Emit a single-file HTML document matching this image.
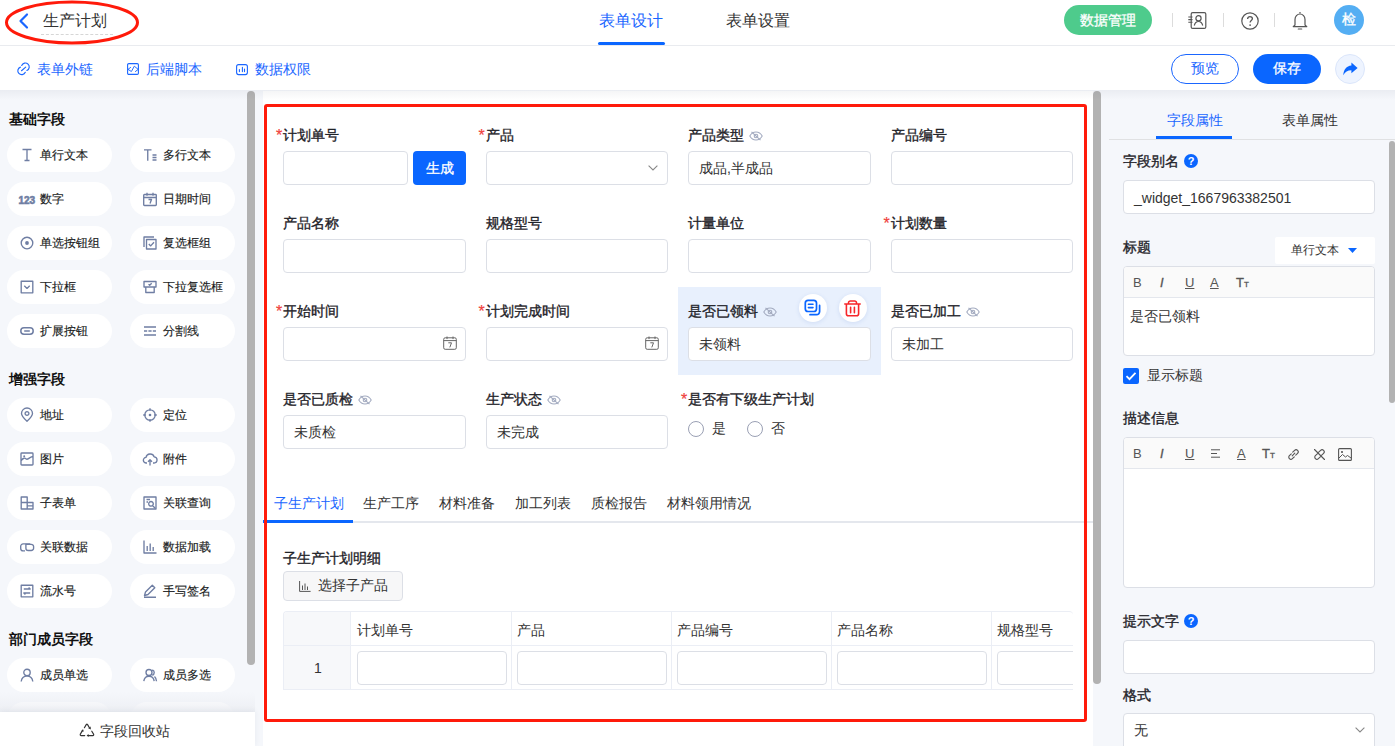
<!DOCTYPE html>
<html><head><meta charset="utf-8">
<style>
*{box-sizing:border-box;margin:0;padding:0}
html,body{width:1395px;height:746px;overflow:hidden;background:#f5f7fb;font-family:"Liberation Sans",sans-serif;color:#1f2329}
.a{position:absolute}
.t{position:absolute;white-space:nowrap;line-height:20px;margin-top:-1px}
svg{position:absolute;overflow:visible}
#hdr{position:absolute;left:0;top:0;width:1395px;height:46px;background:#fff;border-bottom:1px solid #e9ebef}
#tb{position:absolute;left:0;top:46px;width:1395px;height:44px;background:#fff}
.pill{position:absolute;width:105px;height:34px;border-radius:17px;background:#fff}
.pill .ic{position:absolute;left:13px;top:10px;width:14px;height:14px}
.pill span{position:absolute;left:33px;top:7px;font-size:12px;line-height:20px;color:#1a1c22;-webkit-text-stroke:0.15px #1a1c22;white-space:nowrap}
.sec{position:absolute;left:9px;font-size:14px;font-weight:bold;line-height:20px;color:#111;white-space:nowrap}
#canvas{position:absolute;left:263px;top:91px;width:830px;height:655px;background:#fff}
.lbl{position:absolute;font-size:14px;line-height:20px;color:#1f2329;-webkit-text-stroke:0.35px #1f2329;white-space:nowrap;margin-top:-1px}
.req{position:absolute;left:-7px;top:1px;color:#f0413c;font-size:16px;-webkit-text-stroke:0.2px #f0413c}
.inp{position:absolute;height:34px;border:1px solid #dcdfe6;border-radius:4px;background:#fff}
.inp span{position:absolute;left:10px;top:6px;font-size:14px;line-height:20px;color:#333;white-space:nowrap}
.eye{position:absolute;width:14px;height:10px}
.sb{position:absolute;background:#b2b2b2;border-radius:4px}
.rp-lbl{position:absolute;left:1123px;font-size:14px;line-height:20px;color:#1f2329;-webkit-text-stroke:0.35px #1f2329;white-space:nowrap;margin-top:-1px}
.q{position:absolute;width:14px;height:14px;border-radius:7px;background:#0a66ff;color:#fff;font-size:11px;font-weight:bold;line-height:14px;text-align:center}
.rinp{position:absolute;left:1123px;width:252px;border:1px solid #dcdfe6;border-radius:4px;background:#fff}
.tbi{position:absolute;font-size:13px;line-height:16px;color:#555;margin-top:-1px}
</style></head><body>

<!-- HEADER -->
<div id="hdr"></div>
<svg style="left:18px;top:13px" width="11" height="16" viewBox="0 0 11 16"><path d="M9 1.5 L2.5 8 L9 14.5" fill="none" stroke="#1a66ff" stroke-width="2.2" stroke-linecap="round" stroke-linejoin="round"/></svg>
<div class="t" style="left:43px;top:12px;font-size:16px;color:#333">生产计划</div>
<div class="a" style="left:41px;top:34px;width:72px;border-top:1px dashed #d6d6d6"></div>
<div class="t" style="left:598.5px;top:12px;font-size:16px;color:#1a66ff">表单设计</div>
<div class="a" style="left:598px;top:42px;width:67px;height:3px;border-radius:2px;background:#0a66ff"></div>
<div class="t" style="left:725.5px;top:12px;font-size:16px;color:#333">表单设置</div>

<div class="a" style="left:1064px;top:5px;width:88px;height:30px;border-radius:15px;background:#4ecb8c"></div>
<div class="t" style="left:1080px;top:11px;font-size:14px;color:#fff;-webkit-text-stroke:0.3px #fff">数据管理</div>
<div class="a" style="left:1172px;top:13px;width:1px;height:14px;background:#dcdcdc"></div>
<div class="a" style="left:1223px;top:13px;width:1px;height:14px;background:#dcdcdc"></div>
<div class="a" style="left:1274px;top:13px;width:1px;height:14px;background:#dcdcdc"></div>
<!-- contacts icon -->
<svg style="left:1188px;top:12px" width="19" height="17" viewBox="0 0 19 17"><rect x="3.2" y="0.6" width="14.6" height="15.8" rx="1.5" fill="none" stroke="#555" stroke-width="1.2"/><path d="M0.3 5h4.2M0.3 7.6h4.2M0.3 10.2h4.2" stroke="#555" stroke-width="1.1"/><circle cx="10.5" cy="6.2" r="2.6" fill="none" stroke="#555" stroke-width="1.2"/><path d="M6.3 13.5c0.6-2.6 2.2-4 4.2-4s3.6 1.4 4.2 4" fill="none" stroke="#555" stroke-width="1.2"/></svg>
<!-- help -->
<svg style="left:1241px;top:11.5px" width="18" height="18" viewBox="0 0 18 18"><circle cx="9" cy="9" r="8.2" fill="none" stroke="#555" stroke-width="1.2"/><path d="M6.6 7c0-1.5 1-2.4 2.4-2.4s2.4 0.9 2.4 2.2c0 1.6-2.3 1.9-2.3 3.7" fill="none" stroke="#555" stroke-width="1.3"/><circle cx="9.1" cy="13.1" r="0.9" fill="#555"/></svg>
<!-- bell -->
<svg style="left:1292px;top:11px" width="16" height="19" viewBox="0 0 16 19"><path d="M8 1v1.3M3 14V8.5C3 5.4 5.2 3 8 3s5 2.4 5 5.5V14l1.8 1.6H1.2L3 14z" fill="none" stroke="#555" stroke-width="1.2" stroke-linejoin="round"/><path d="M6.3 18h3.4" stroke="#555" stroke-width="1.2" stroke-linecap="round"/></svg>
<div class="a" style="left:1334px;top:5px;width:30px;height:30px;border-radius:15px;background:#54aef3"></div>
<div class="t" style="left:1342px;top:10px;font-size:14px;color:#fff;-webkit-text-stroke:0.3px #fff">检</div>

<!-- TOOLBAR -->
<div id="tb"></div>
<svg style="left:17px;top:62px" width="13" height="13" viewBox="0 0 13 13"><path d="M4.7 3.5A3.9 3.9 0 1 1 9.9 8.5M3.4 5.1A3.9 3.9 0 1 0 8.3 10.3M4.5 8.7L8.7 5.1" fill="none" stroke="#1a66ff" stroke-width="1.15" stroke-linecap="round"/></svg>
<div class="t" style="left:36.5px;top:60px;font-size:14px;color:#1a66ff">表单外链</div>
<svg style="left:127px;top:63px" width="12" height="12" viewBox="0 0 12 12"><rect x="0.6" y="0.6" width="10.8" height="10.8" rx="1.2" fill="none" stroke="#1a66ff" stroke-width="1.1"/><path d="M3.6 4.4L1 6.4L4.4 8.5L7.3 3.2L11.2 6.4L8.4 8.5" fill="none" stroke="#1a66ff" stroke-width="0.95" stroke-linecap="round" stroke-linejoin="round"/></svg>
<div class="t" style="left:145.5px;top:60px;font-size:14px;color:#1a66ff">后端脚本</div>
<svg style="left:236px;top:64px" width="12" height="11" viewBox="0 0 12 11"><rect x="0.6" y="0.6" width="10.8" height="10" rx="2" fill="none" stroke="#1a66ff" stroke-width="1.1"/><path d="M3.4 5.5V7.6M6.4 3.4V7.6M8.5 5V7.6" fill="none" stroke="#1a66ff" stroke-width="1.1" stroke-linecap="round"/></svg>
<div class="t" style="left:254.5px;top:60px;font-size:14px;color:#1a66ff">数据权限</div>

<div class="a" style="left:1171px;top:54px;width:68px;height:30px;border-radius:15px;border:1px solid #1a66ff;background:#fff"></div>
<div class="t" style="left:1191px;top:59px;font-size:14px;color:#1a66ff">预览</div>
<div class="a" style="left:1253px;top:54px;width:68px;height:30px;border-radius:15px;background:#0a66ff"></div>
<div class="t" style="left:1273px;top:59px;font-size:14px;color:#fff;-webkit-text-stroke:0.3px #fff">保存</div>
<div class="a" style="left:1335px;top:54px;width:30px;height:30px;border-radius:15px;background:#eef4ff;border:1px solid #dbe6fb"></div>
<svg style="left:1343px;top:62px" width="15" height="14" viewBox="0 0 15 14"><path d="M8.4 0.6L14.6 5.9L8.4 11.2V8.3C4.6 8.3 2.1 9.8 0.3 13.2C0.6 7.8 3.4 4.1 8.4 3.6z" fill="#0a66ff"/></svg>


<!-- LEFT PANEL -->
<div id="left" style="position:absolute;left:0;top:91px;width:247px;height:655px;overflow:hidden">
<div style="position:absolute;left:0;top:-91px;width:247px;height:746px">
<div class="sec" style="top:109px">基础字段</div>
<div class="pill" style="left:7px;top:138px"><svg class="ic" viewBox="0 0 14 14" width="14" height="14"><path d="M2.5 1.5h9M7 1.5v11M4.5 12.5h5" stroke="#6f7ea3" stroke-width="1.35" fill="none" stroke-linejoin="round"/></svg><span>单行文本</span></div>
<div class="pill" style="left:130px;top:138px"><svg class="ic" viewBox="0 0 14 14" width="14" height="14"><path d="M1 1.8h7.5M4.75 1.8v11M9.5 7h4M9.5 9.5h4M9.5 12h4" stroke="#6f7ea3" stroke-width="1.35" fill="none" stroke-linejoin="round"/></svg><span>多行文本</span></div>
<div class="pill" style="left:7px;top:182px"><svg class="ic" viewBox="0 0 14 14" width="14" height="14"><text x="-1.5" y="11.5" style="font:bold 10px 'Liberation Sans',sans-serif" fill="#6f7ea3" stroke="#6f7ea3" stroke-width="0.6">123</text></svg><span>数字</span></div>
<div class="pill" style="left:130px;top:182px"><svg class="ic" viewBox="0 0 14 14" width="14" height="14"><path d="M1.5 2.5h11a0.8 0.8 0 0 1 0.8 0.8v9.4a0.8 0.8 0 0 1-0.8 0.8h-11a0.8 0.8 0 0 1-0.8-0.8V3.3a0.8 0.8 0 0 1 0.8-0.8zM0.7 5.5h12.6M4 0.8v3M10 0.8v3M5.5 7.5h3l-1.5 4" stroke="#6f7ea3" stroke-width="1.35" fill="none" stroke-linejoin="round"/></svg><span>日期时间</span></div>
<div class="pill" style="left:7px;top:226px"><svg class="ic" viewBox="0 0 14 14" width="14" height="14"><path d="M7 1.2a5.8 5.8 0 1 1 0 11.6a5.8 5.8 0 1 1 0-11.6z" stroke="#6f7ea3" stroke-width="1.35" fill="none" stroke-linejoin="round"/><circle cx="7" cy="7" r="1.9" fill="#6f7ea3"/></svg><span>单选按钮组</span></div>
<div class="pill" style="left:130px;top:226px"><svg class="ic" viewBox="0 0 14 14" width="14" height="14"><path d="M1 11V1h10" stroke="#6f7ea3" stroke-width="1.35" fill="none" stroke-linejoin="round"/><path d="M3.5 3.5h9.5v9.5H3.5zM5.8 8l1.9 1.9 3.3-3.6" stroke="#6f7ea3" stroke-width="1.35" fill="none" stroke-linejoin="round"/></svg><span>复选框组</span></div>
<div class="pill" style="left:7px;top:270px"><svg class="ic" viewBox="0 0 14 14" width="14" height="14"><path d="M1.2 1.2h11.6v11.6H1.2zM4.3 5.8l2.7 2.6 2.7-2.6" stroke="#6f7ea3" stroke-width="1.35" fill="none" stroke-linejoin="round"/></svg><span>下拉框</span></div>
<div class="pill" style="left:130px;top:270px"><svg class="ic" viewBox="0 0 14 14" width="14" height="14"><path d="M1 1.5h12v5.5H1zM2.8 7v5.5h8.4V7M5.5 4.2l1.2 1 2-2" stroke="#6f7ea3" stroke-width="1.35" fill="none" stroke-linejoin="round"/></svg><span>下拉复选框</span></div>
<div class="pill" style="left:7px;top:314px"><svg class="ic" viewBox="0 0 14 14" width="14" height="14"><path d="M4 3.8h6a3.2 3.2 0 0 1 0 6.4H4a3.2 3.2 0 0 1 0-6.4zM4.2 7h5.6" stroke="#6f7ea3" stroke-width="1.5" fill="none" stroke-linejoin="round"/></svg><span>扩展按钮</span></div>
<div class="pill" style="left:130px;top:314px"><svg class="ic" viewBox="0 0 14 14" width="14" height="14"><path d="M1 3h12M1 7h3.2M5.4 7h3.2M9.8 7H13M1 11h12" stroke="#6f7ea3" stroke-width="1.35" fill="none" stroke-linejoin="round"/></svg><span>分割线</span></div>
<div class="sec" style="top:369px">增强字段</div>
<div class="pill" style="left:7px;top:398px"><svg class="ic" viewBox="0 0 14 14" width="14" height="14"><path d="M7 13.3C3.7 10.2 1.5 7.7 1.5 5.5a5.5 5.5 0 0 1 11 0c0 2.2-2.2 4.7-5.5 7.8z" stroke="#6f7ea3" stroke-width="1.35" fill="none" stroke-linejoin="round"/><path d="M7 3.6a1.9 1.9 0 1 1 0 3.8a1.9 1.9 0 1 1 0-3.8z" stroke="#6f7ea3" stroke-width="1.35" fill="none" stroke-linejoin="round"/></svg><span>地址</span></div>
<div class="pill" style="left:130px;top:398px"><svg class="ic" viewBox="0 0 14 14" width="14" height="14"><path d="M7 1.8a5.2 5.2 0 1 1 0 10.4a5.2 5.2 0 1 1 0-10.4z" stroke="#6f7ea3" stroke-width="1.35" fill="none" stroke-linejoin="round"/><circle cx="7" cy="7" r="1.3" fill="#6f7ea3"/><path d="M7 0.2v2.6M7 11.2v2.6M0.2 7h2.6M11.2 7h2.6" stroke="#6f7ea3" stroke-width="1.35" fill="none" stroke-linejoin="round"/></svg><span>定位</span></div>
<div class="pill" style="left:7px;top:442px"><svg class="ic" viewBox="0 0 14 14" width="14" height="14"><path d="M1.8 1h10.4a0.8 0.8 0 0 1 0.8 0.8v10.4a0.8 0.8 0 0 1-0.8 0.8H1.8a0.8 0.8 0 0 1-0.8-0.8V1.8a0.8 0.8 0 0 1 0.8-0.8zM1.2 8.5c2-2.5 3.5-3 5-1.5s3-2 6.6-2.5" stroke="#6f7ea3" stroke-width="1.35" fill="none" stroke-linejoin="round"/><circle cx="4.2" cy="4.2" r="1" fill="#6f7ea3"/></svg><span>图片</span></div>
<div class="pill" style="left:130px;top:442px"><svg class="ic" viewBox="0 0 14 14" width="14" height="14"><path d="M4 11H3.3A2.8 2.8 0 0 1 3 5.4a4.2 4.2 0 0 1 8.1-0.6A3.1 3.1 0 0 1 10.8 11H10M7 13.5V7.8M5 9.8l2-2 2 2" stroke="#6f7ea3" stroke-width="1.35" fill="none" stroke-linejoin="round"/></svg><span>附件</span></div>
<div class="pill" style="left:7px;top:486px"><svg class="ic" viewBox="0 0 14 14" width="14" height="14"><path d="M1.2 1h6v12H1.2zM7.2 6.5h5.8V13H7.2M1.2 6.5h6M7.2 9.8H13" stroke="#6f7ea3" stroke-width="1.35" fill="none" stroke-linejoin="round"/></svg><span>子表单</span></div>
<div class="pill" style="left:130px;top:486px"><svg class="ic" viewBox="0 0 14 14" width="14" height="14"><path d="M1 1h12v12H1zM3.5 3.5h3.5M3.5 6h1.5" stroke="#6f7ea3" stroke-width="1.35" fill="none" stroke-linejoin="round"/><path d="M8 5.5a2.3 2.3 0 1 1 0 4.6a2.3 2.3 0 1 1 0-4.6zM9.7 9.7l2.5 2.5" stroke="#6f7ea3" stroke-width="1.35" fill="none" stroke-linejoin="round"/></svg><span>关联查询</span></div>
<div class="pill" style="left:7px;top:530px"><svg class="ic" viewBox="0 0 14 14" width="14" height="14"><path d="M9.6 4.6V3.9H3.1A2.4 2.4 0 0 0 0.7 6.3v2.1a2.4 2.4 0 0 0 2.4 2.4H5" stroke="#6f7ea3" stroke-width="1.35" fill="none"/><path d="M5.9 4.3h5.4a2.3 2.3 0 0 1 2.3 2.3v1.6a2.3 2.3 0 0 1-2.3 2.3H8.2a2.3 2.3 0 0 1-2.3-2.3z" stroke="#6f7ea3" stroke-width="1.35" fill="none"/></svg><span>关联数据</span></div>
<div class="pill" style="left:130px;top:530px"><svg class="ic" viewBox="0 0 14 14" width="14" height="14"><path d="M1 0.5v12.5h12.5M4.2 11V6M7.2 11V3.5M10.2 11V7" stroke="#6f7ea3" stroke-width="1.35" fill="none" stroke-linejoin="round"/></svg><span>数据加载</span></div>
<div class="pill" style="left:7px;top:574px"><svg class="ic" viewBox="0 0 14 14" width="14" height="14"><path d="M1.2 1.2h11.6v11.6H1.2zM3.8 5h6.4l-1.6-1.4M10.2 9H3.8l1.6 1.4" stroke="#6f7ea3" stroke-width="1.35" fill="none" stroke-linejoin="round"/></svg><span>流水号</span></div>
<div class="pill" style="left:130px;top:574px"><svg class="ic" viewBox="0 0 14 14" width="14" height="14"><path d="M1.5 11.5l1-3.5 6.8-6.8 2.5 2.5-6.8 6.8zM1 13.2h12" stroke="#6f7ea3" stroke-width="1.35" fill="none" stroke-linejoin="round"/></svg><span>手写签名</span></div>
<div class="sec" style="top:629px">部门成员字段</div>
<div class="pill" style="left:7px;top:658px"><svg class="ic" viewBox="0 0 14 14" width="14" height="14"><path d="M7 1.2a3.2 3.2 0 1 1 0 6.4a3.2 3.2 0 1 1 0-6.4zM1.2 13.5c0.4-3.3 2.7-5.4 5.8-5.4s5.4 2.1 5.8 5.4" stroke="#6f7ea3" stroke-width="1.35" fill="none" stroke-linejoin="round"/></svg><span>成员单选</span></div>
<div class="pill" style="left:130px;top:658px"><svg class="ic" viewBox="0 0 14 14" width="14" height="14"><path d="M6 1.5a3 3 0 1 1 0 6a3 3 0 1 1 0-6zM0.8 13.2c0.4-3.1 2.4-5 5.2-5s4.8 1.9 5.2 5M9.3 1.8a3 3 0 0 1 0 5.6M11.5 8.6c1.1 1 1.8 2.6 2 4.6" stroke="#6f7ea3" stroke-width="1.35" fill="none" stroke-linejoin="round"/></svg><span>成员多选</span></div>
<div class="pill" style="left:7px;top:702px"><svg class="ic" viewBox="0 0 14 14" width="14" height="14"></svg><span>部门单选</span></div>
<div class="pill" style="left:130px;top:702px"><svg class="ic" viewBox="0 0 14 14" width="14" height="14"></svg><span>部门多选</span></div>
</div></div>
<div class="sb" style="left:247px;top:91px;width:8px;height:574px"></div>
<div class="a" style="left:0;top:692px;width:255px;height:20px;background:linear-gradient(rgba(244,246,250,0),rgba(236,238,243,0.9))"></div>
<div class="a" style="left:0;top:712px;width:255px;height:34px;background:#fff;box-shadow:0 -1px 6px rgba(40,50,80,.07)"></div>
<svg style="left:79px;top:723px" width="16" height="14" viewBox="0 0 16 14"><path d="M5.4 4.7L7.2 1.6Q7.9 0.9 8.6 1.6L10.4 4.7M3.4 7.6L1.3 11.3Q1 12.6 2.2 12.6H5.7M12.8 8.2L14.6 11.3Q15 12.6 13.8 12.6H9" stroke="#333" stroke-width="1.2" fill="none" stroke-linecap="round"/><path d="M9.2 5.2L11.9 6.4L11.6 3.6zM2.2 8.4L4.8 8.6L4 6zM9.6 11.1V14.1L7.6 12.6z" fill="#333"/></svg>
<div class="t" style="left:100px;top:722px;font-size:14px;color:#333">字段回收站</div>


<!-- CANVAS -->
<div id="canvas"></div>
<div style="position:absolute;left:0;top:0;width:1395px;height:746px">
<div class="a" style="left:678px;top:287px;width:203px;height:88px;background:#e8f0fd"></div>
<div class="lbl" style="left:283px;top:126px"><span class="req">*</span>计划单号</div>
<div class="inp" style="left:283px;top:151px;width:125px"></div>
<div class="a" style="left:413px;top:151px;width:53px;height:34px;border-radius:4px;background:#0a66ff"></div><div class="t" style="left:425.5px;top:159px;font-size:14px;color:#fff;-webkit-text-stroke:0.3px #fff">生成</div>
<div class="lbl" style="left:485.5px;top:126px"><span class="req">*</span>产品</div>
<div class="inp" style="left:485.5px;top:151px;width:182.5px"></div>
<svg viewBox="0 0 10 6" width="10" height="6" style="left:647.5px;top:165px"><path d="M0.6 0.6L5 5 9.4 0.6" stroke="#888" stroke-width="1.1" fill="none"/></svg>
<div class="lbl" style="left:688px;top:126px">产品类型</div>
<svg class="eye" viewBox="0 0 14 10" width="14" height="10" style="left:749px;top:131px"><path d="M0.8 5C2.3 2.3 4.4 1 7 1s4.7 1.3 6.2 4C11.7 7.7 9.6 9 7 9S2.3 7.7 0.8 5z" stroke="#a3abc0" stroke-width="1.1" fill="none"/><circle cx="7" cy="5" r="1.8" stroke="#a3abc0" stroke-width="1.1" fill="none"/><path d="M2.5 0.8l9 8.4" stroke="#a3abc0" stroke-width="1.1"/></svg>
<div class="inp" style="left:688px;top:151px;width:182.5px"><span>成品,半成品</span></div>
<div class="lbl" style="left:890.5px;top:126px">产品编号</div>
<div class="inp" style="left:890.5px;top:151px;width:182.5px"></div>
<div class="lbl" style="left:283px;top:214px">产品名称</div>
<div class="inp" style="left:283px;top:239px;width:182.5px"></div>
<div class="lbl" style="left:485.5px;top:214px">规格型号</div>
<div class="inp" style="left:485.5px;top:239px;width:182.5px"></div>
<div class="lbl" style="left:688px;top:214px">计量单位</div>
<div class="inp" style="left:688px;top:239px;width:182.5px"></div>
<div class="lbl" style="left:890.5px;top:214px"><span class="req">*</span>计划数量</div>
<div class="inp" style="left:890.5px;top:239px;width:182.5px"></div>
<div class="lbl" style="left:283px;top:302px"><span class="req">*</span>开始时间</div>
<div class="inp" style="left:283px;top:327px;width:182.5px"></div>
<svg viewBox="0 0 14 14" width="14" height="14" style="left:443px;top:336px"><rect x="0.7" y="1.8" width="12.6" height="11.5" rx="1.5" stroke="#666" stroke-width="1" fill="none"/><path d="M0.7 4.6h12.6M4 0.5v2.6M10 0.5v2.6M5.3 6.8h3.2l-1.7 4.6" stroke="#666" stroke-width="1" fill="none"/></svg>
<div class="lbl" style="left:485.5px;top:302px"><span class="req">*</span>计划完成时间</div>
<div class="inp" style="left:485.5px;top:327px;width:182.5px"></div>
<svg viewBox="0 0 14 14" width="14" height="14" style="left:645px;top:336px"><rect x="0.7" y="1.8" width="12.6" height="11.5" rx="1.5" stroke="#666" stroke-width="1" fill="none"/><path d="M0.7 4.6h12.6M4 0.5v2.6M10 0.5v2.6M5.3 6.8h3.2l-1.7 4.6" stroke="#666" stroke-width="1" fill="none"/></svg>
<div class="lbl" style="left:688px;top:302px">是否已领料</div>
<svg class="eye" viewBox="0 0 14 10" width="14" height="10" style="left:763px;top:307px"><path d="M0.8 5C2.3 2.3 4.4 1 7 1s4.7 1.3 6.2 4C11.7 7.7 9.6 9 7 9S2.3 7.7 0.8 5z" stroke="#a3abc0" stroke-width="1.1" fill="none"/><circle cx="7" cy="5" r="1.8" stroke="#a3abc0" stroke-width="1.1" fill="none"/><path d="M2.5 0.8l9 8.4" stroke="#a3abc0" stroke-width="1.1"/></svg>
<div class="inp" style="left:688px;top:327px;width:182.5px"><span>未领料</span></div>
<div class="lbl" style="left:890.5px;top:302px">是否已加工</div>
<svg class="eye" viewBox="0 0 14 10" width="14" height="10" style="left:965.5px;top:307px"><path d="M0.8 5C2.3 2.3 4.4 1 7 1s4.7 1.3 6.2 4C11.7 7.7 9.6 9 7 9S2.3 7.7 0.8 5z" stroke="#a3abc0" stroke-width="1.1" fill="none"/><circle cx="7" cy="5" r="1.8" stroke="#a3abc0" stroke-width="1.1" fill="none"/><path d="M2.5 0.8l9 8.4" stroke="#a3abc0" stroke-width="1.1"/></svg>
<div class="inp" style="left:890.5px;top:327px;width:182.5px"><span>未加工</span></div>
<div class="lbl" style="left:283px;top:390px">是否已质检</div>
<svg class="eye" viewBox="0 0 14 10" width="14" height="10" style="left:358px;top:395px"><path d="M0.8 5C2.3 2.3 4.4 1 7 1s4.7 1.3 6.2 4C11.7 7.7 9.6 9 7 9S2.3 7.7 0.8 5z" stroke="#a3abc0" stroke-width="1.1" fill="none"/><circle cx="7" cy="5" r="1.8" stroke="#a3abc0" stroke-width="1.1" fill="none"/><path d="M2.5 0.8l9 8.4" stroke="#a3abc0" stroke-width="1.1"/></svg>
<div class="inp" style="left:283px;top:415px;width:182.5px"><span>未质检</span></div>
<div class="lbl" style="left:485.5px;top:390px">生产状态</div>
<svg class="eye" viewBox="0 0 14 10" width="14" height="10" style="left:546.5px;top:395px"><path d="M0.8 5C2.3 2.3 4.4 1 7 1s4.7 1.3 6.2 4C11.7 7.7 9.6 9 7 9S2.3 7.7 0.8 5z" stroke="#a3abc0" stroke-width="1.1" fill="none"/><circle cx="7" cy="5" r="1.8" stroke="#a3abc0" stroke-width="1.1" fill="none"/><path d="M2.5 0.8l9 8.4" stroke="#a3abc0" stroke-width="1.1"/></svg>
<div class="inp" style="left:485.5px;top:415px;width:182.5px"><span>未完成</span></div>
<div class="lbl" style="left:688px;top:390px"><span class="req">*</span>是否有下级生产计划</div>
<div class="a" style="left:688px;top:421px;width:16px;height:16px;border-radius:8px;border:1px solid #9aa0b4;background:#fff"></div><div class="t" style="left:712px;top:419px;font-size:14px;color:#333">是</div>
<div class="a" style="left:747px;top:421px;width:16px;height:16px;border-radius:8px;border:1px solid #9aa0b4;background:#fff"></div><div class="t" style="left:771px;top:419px;font-size:14px;color:#333">否</div>
<div class="a" style="left:799px;top:294px;width:28px;height:28px;border-radius:14px;background:#fff;box-shadow:0 1px 4px rgba(30,80,180,.12)"></div>
<svg viewBox="0 0 17 17" width="17" height="17" style="left:804px;top:299px"><rect x="1.3" y="1.3" width="11.2" height="11.2" rx="2.8" stroke="#0a66ff" stroke-width="1.7" fill="none"/><path d="M4.4 5.3h4.6M4.4 8.6h4.6" stroke="#0a66ff" stroke-width="1.6" stroke-linecap="round"/><path d="M15.6 6.4v6.2a3.1 3.1 0 0 1-3.1 3.1H6" stroke="#0a66ff" stroke-width="1.7" fill="none" stroke-linecap="round"/></svg>
<div class="a" style="left:839px;top:294px;width:28px;height:28px;border-radius:14px;background:#fff;box-shadow:0 1px 4px rgba(30,80,180,.12)"></div>
<svg viewBox="0 0 17 17" width="17" height="17" style="left:844px;top:300px"><path d="M0.8 4h15.4M4.5 4V2.9a1.9 1.9 0 0 1 1.9-1.9h4.2a1.9 1.9 0 0 1 1.9 1.9V4M2.4 4.8v9a2 2 0 0 0 2 2h8.2a2 2 0 0 0 2-2v-9M6.6 7.3v5.4M10.4 7.3v5.4" stroke="#f7262a" stroke-width="1.6" fill="none" stroke-linecap="round"/></svg>
<div class="a" style="left:263px;top:521px;width:830px;height:2px;background:#e4e7ed"></div>
<div class="a" style="left:263px;top:520px;width:90px;height:3px;background:#0a66ff"></div>
<div class="t" style="left:273.5px;top:494px;font-size:14px;color:#1a66ff">子生产计划</div>
<div class="t" style="left:363px;top:494px;font-size:14px;color:#333">生产工序</div>
<div class="t" style="left:439px;top:494px;font-size:14px;color:#333">材料准备</div>
<div class="t" style="left:515px;top:494px;font-size:14px;color:#333">加工列表</div>
<div class="t" style="left:591px;top:494px;font-size:14px;color:#333">质检报告</div>
<div class="t" style="left:667px;top:494px;font-size:14px;color:#333">材料领用情况</div>
<div class="lbl" style="left:283px;top:549px">子生产计划明细</div>
<div class="a" style="left:283px;top:571px;width:120px;height:30px;border:1px solid #dcdfe6;border-radius:4px;background:#f7f7f8"></div>
<svg viewBox="0 0 12 11" width="12" height="11" style="left:299px;top:581px"><path d="M0.6 0v10.4h11M3.5 9V4.5M6 9V2.5M8.5 9V5.5" stroke="#555" stroke-width="1" fill="none"/></svg>
<div class="t" style="left:317.5px;top:576px;font-size:14px;color:#333">选择子产品</div>
<div class="a" style="left:283px;top:611px;width:790px;height:79px;overflow:hidden;border:1px solid #ebeef5;border-right:none;border-radius:4px 4px 0 0">
<div class="a" style="left:0;top:0;width:67px;height:77px;background:#f7f8fa;border-right:1px solid #ebeef5"></div>
<div class="a" style="left:0;top:33px;width:790px;height:1px;background:#ebeef5"></div>
<div class="t" style="left:30px;top:47px;font-size:14px;color:#333">1</div>
<div class="t" style="left:73px;top:9px;font-size:14px;color:#333">计划单号</div>
<div class="inp" style="left:73px;top:39px;width:150px"></div>
<div class="a" style="left:227px;top:0;width:1px;height:77px;background:#ebeef5"></div>
<div class="t" style="left:233px;top:9px;font-size:14px;color:#333">产品</div>
<div class="inp" style="left:233px;top:39px;width:150px"></div>
<div class="a" style="left:387px;top:0;width:1px;height:77px;background:#ebeef5"></div>
<div class="t" style="left:393px;top:9px;font-size:14px;color:#333">产品编号</div>
<div class="inp" style="left:393px;top:39px;width:150px"></div>
<div class="a" style="left:547px;top:0;width:1px;height:77px;background:#ebeef5"></div>
<div class="t" style="left:553px;top:9px;font-size:14px;color:#333">产品名称</div>
<div class="inp" style="left:553px;top:39px;width:150px"></div>
<div class="a" style="left:707px;top:0;width:1px;height:77px;background:#ebeef5"></div>
<div class="t" style="left:713px;top:9px;font-size:14px;color:#333">规格型号</div>
<div class="inp" style="left:713px;top:39px;width:150px"></div>
<div class="a" style="left:0;top:77px;width:790px;height:1px;background:#ebeef5"></div>
</div>
</div>
<div class="sb" style="left:1093px;top:91px;width:8px;height:593px"></div>


<!-- RIGHT PANEL -->
<div class="t" style="left:1166.5px;top:111px;font-size:14px;color:#1a66ff">字段属性</div>
<div class="t" style="left:1282px;top:111px;font-size:14px;color:#333">表单属性</div>
<div class="a" style="left:1109px;top:139px;width:286px;height:1px;background:#e0e1e3"></div>
<div class="a" style="left:1156px;top:136px;width:76px;height:3px;background:#0a66ff"></div>
<div class="sb" style="left:1389px;top:141px;width:6px;height:262px;border-radius:3px"></div>

<div class="rp-lbl" style="top:152px">字段别名</div>
<div class="q" style="left:1184px;top:154px">?</div>
<div class="rinp" style="top:180px;height:34px"><div class="t" style="left:10px;top:8px;font-size:14px;color:#333">_widget_1667963382501</div></div>

<div class="rp-lbl" style="top:238px">标题</div>
<div class="a" style="left:1275px;top:237px;width:100px;height:27px;background:#fff;border-radius:2px"></div>
<div class="t" style="left:1290.5px;top:241px;font-size:12px;color:#333">单行文本</div>
<svg viewBox="0 0 9 5" width="9" height="5" style="left:1348px;top:248px"><path d="M0 0h9L4.5 5z" fill="#0a66ff"/></svg>
<div class="rinp" style="top:266px;height:90px;overflow:hidden">
  <div class="a" style="left:0;top:0;width:250px;height:31px;background:#fafafa;border-bottom:1px solid #e4e7ed"></div>
  <div class="tbi" style="left:9px;top:9px">B</div>
  <div class="tbi" style="left:36px;top:9px;font-style:italic;-webkit-text-stroke:0.3px #555">I</div>
  <div class="tbi" style="left:61px;top:9px;text-decoration:underline">U</div>
  <div class="tbi" style="left:86px;top:9px;text-decoration:underline">A</div>
  <div class="tbi" style="left:112px;top:9px;-webkit-text-stroke:0.3px #555">T<span style="font-size:8px">T</span></div>
  <div class="t" style="left:6px;top:40px;font-size:14px;color:#333">是否已领料</div>
</div>
<div class="a" style="left:1123px;top:368px;width:16px;height:16px;border-radius:2px;background:#0a66ff"></div>
<svg viewBox="0 0 16 16" width="16" height="16" style="left:1123px;top:368px"><path d="M3.5 8.2l3 3 6-6.3" stroke="#fff" stroke-width="1.8" fill="none"/></svg>
<div class="t" style="left:1146.5px;top:366px;font-size:14px;color:#333">显示标题</div>

<div class="rp-lbl" style="top:409px">描述信息</div>
<div class="rinp" style="top:437px;height:151px;overflow:hidden">
  <div class="a" style="left:0;top:0;width:250px;height:31px;background:#fafafa;border-bottom:1px solid #e4e7ed"></div>
  <div class="tbi" style="left:9px;top:9px">B</div>
  <div class="tbi" style="left:36px;top:9px;font-style:italic;-webkit-text-stroke:0.3px #555">I</div>
  <div class="tbi" style="left:61px;top:9px;text-decoration:underline">U</div>
  <svg viewBox="0 0 9 9" width="9" height="9" style="left:87px;top:11px"><path d="M0 0.8h9M0 4.5h6M0 8.2h9" stroke="#555" stroke-width="1"/></svg>
  <div class="tbi" style="left:113px;top:9px;text-decoration:underline">A</div>
  <div class="tbi" style="left:138px;top:9px;-webkit-text-stroke:0.3px #555">T<span style="font-size:8px">T</span></div>
  <svg viewBox="0 0 13 13" width="13" height="13" style="left:163px;top:10px"><path d="M5.2 7.8l2.6-2.6M4.3 5.8l-1.9 1.9a2.1 2.1 0 0 0 3 3l1.9-1.9M8.7 7.2l1.9-1.9a2.1 2.1 0 0 0-3-3L5.7 4.2" fill="none" stroke="#555" stroke-width="1.1" stroke-linecap="round"/></svg>
  <svg viewBox="0 0 13 13" width="13" height="13" style="left:189px;top:10px"><path d="M4.3 5.8l-1.9 1.9a2.1 2.1 0 0 0 3 3l1.9-1.9M8.7 7.2l1.9-1.9a2.1 2.1 0 0 0-3-3L5.7 4.2M1.5 1.5l10 10" fill="none" stroke="#555" stroke-width="1.1" stroke-linecap="round"/></svg>
  <svg viewBox="0 0 14 13" width="14" height="13" style="left:214px;top:10px"><rect x="0.6" y="0.6" width="12.8" height="11.8" rx="1" stroke="#555" stroke-width="1.1" fill="none"/><path d="M1 10l3.5-3.5 3 2.5 2-1.5 3.5 2.5" stroke="#555" stroke-width="1" fill="none"/><circle cx="4" cy="4" r="1.1" fill="#555"/></svg>
</div>

<div class="rp-lbl" style="top:612px">提示文字</div>
<div class="q" style="left:1184px;top:614px">?</div>
<div class="rinp" style="top:640px;height:34px"></div>
<div class="rp-lbl" style="top:686px">格式</div>
<div class="rinp" style="top:713px;height:40px"><div class="t" style="left:10px;top:7px;font-size:14px;color:#333">无</div></div>
<svg viewBox="0 0 10 6" width="10" height="6" style="left:1354.5px;top:727px"><path d="M0.6 0.6L5 5 9.4 0.6" stroke="#888" stroke-width="1.1" fill="none"/></svg>

<!-- OVERLAYS -->
<div class="a" style="left:0;top:90px;width:1395px;height:10px;background:linear-gradient(rgba(30,40,70,.05),rgba(30,40,70,0))"></div>
<div class="a" style="left:264px;top:104px;width:823px;height:618px;border:3px solid #ff1a0a;border-radius:3px"></div>
<svg style="left:0;top:0" width="150" height="50" viewBox="0 0 150 50"><ellipse cx="72" cy="22.5" rx="65.5" ry="20.5" fill="none" stroke="#ff1a0a" stroke-width="3"/></svg>

</body></html>
